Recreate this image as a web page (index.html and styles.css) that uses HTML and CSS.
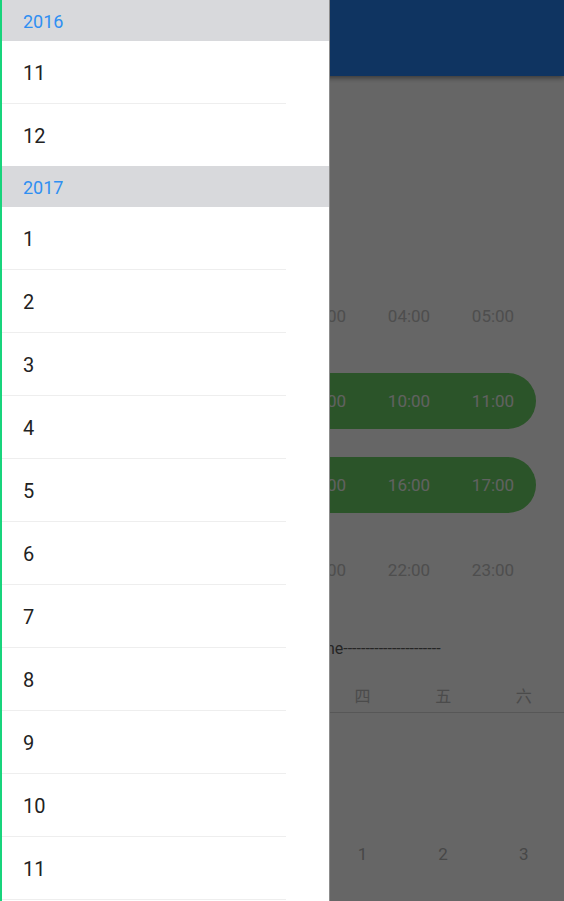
FILE: index.html
```html
<!DOCTYPE html>
<html lang="zh">
<head>
<meta charset="utf-8">
<title>Schedule</title>
<link rel="stylesheet" href="styles.css">
</head>
<body>
<div class="page">
  <header class="appbar"></header>
  <main class="content">
    <div class="hours">
      <div class="hour-row">
        <span>00:00</span><span>01:00</span><span>02:00</span><span>03:00</span><span>04:00</span><span>05:00</span>
      </div>
      <div class="hour-row selected">
        <span>06:00</span><span>07:00</span><span>08:00</span><span>09:00</span><span>10:00</span><span>11:00</span>
      </div>
      <div class="hour-row selected">
        <span>12:00</span><span>13:00</span><span>14:00</span><span>15:00</span><span>16:00</span><span>17:00</span>
      </div>
      <div class="hour-row">
        <span>18:00</span><span>19:00</span><span>20:00</span><span>21:00</span><span>22:00</span><span>23:00</span>
      </div>
    </div>
    <p class="title">----------Timeline----------------------</p>
    <div class="week">
      <span>日</span><span>一</span><span>二</span><span>三</span><span>四</span><span>五</span><span>六</span>
    </div>
    <div class="days">
      <span></span><span></span><span></span><span></span><span>1</span><span>2</span><span>3</span>
    </div>
  </main>
</div>
<div class="scrim"></div>
<nav class="drawer">
  <div class="group-head">2016</div>
  <div class="item">11</div>
  <div class="item last">12</div>
  <div class="group-head">2017</div>
  <div class="item">1</div>
  <div class="item">2</div>
  <div class="item">3</div>
  <div class="item">4</div>
  <div class="item">5</div>
  <div class="item">6</div>
  <div class="item">7</div>
  <div class="item">8</div>
  <div class="item">9</div>
  <div class="item">10</div>
  <div class="item">11</div>
  <div class="item">12</div>
</nav>
</body>
</html>
```
FILE: styles.css
```css
* { box-sizing: border-box; }
html, body {
  margin: 0;
  padding: 0;
  width: 564px;
  height: 901px;
  overflow: hidden;
  background: #ffffff;
  font-family: Roboto, "Noto Sans CJK SC", sans-serif;
}
.page {
  width: 564px;
  height: 901px;
  display: flex;
  flex-direction: column;
}
.appbar {
  height: 76px;
  flex: none;
  background: #2682f3;
  box-shadow: 0 2px 5px rgba(0, 0, 0, 0.45);
  position: relative;
  z-index: 1;
}
.content {
  flex: 1;
  display: flex;
  flex-direction: column;
  padding-top: 212px;
}
.hours {
  display: flex;
  flex-direction: column;
  gap: 28.5px;
  padding: 0 28px;
}
.hour-row {
  height: 56px;
  display: grid;
  grid-template-columns: repeat(6, 84px);
  align-items: center;
  padding: 0 1px 0 3px;
  border-radius: 28px;
  color: #c2c2c2;
  font-size: 17px;
}
.hour-row span { text-align: center; }
.hour-row.selected {
  background: #6cd166;
  color: #f0f4ef;
}
.title {
  margin: 38px 0 0 0;
  padding-left: 238px;
  font-size: 16px;
  line-height: 26px;
  color: #5e5e5e;
  white-space: nowrap;
}
.week {
  margin-top: 16px;
  display: grid;
  grid-template-columns: repeat(7, 1fr);
  height: 35px;
  align-items: center;
  border-bottom: 1px solid #d9d9d9;
  color: #bbbbbb;
  font-size: 16px;
}
.week span, .days span { text-align: center; }
.days {
  margin-top: 124px;
  display: grid;
  grid-template-columns: repeat(7, 1fr);
  height: 34px;
  align-items: center;
  color: #b3b3b3;
  font-size: 17px;
}
.scrim {
  position: fixed;
  inset: 0;
  background: rgba(0, 0, 0, 0.6);
  z-index: 5;
}
.drawer {
  position: fixed;
  top: 0;
  left: 0;
  bottom: 0;
  width: 330px;
  background: #ffffff;
  border-left: 2px solid #18d47c;
  border-right: 1px solid #8c8c8c;
  z-index: 10;
  overflow: hidden;
  display: flex;
  flex-direction: column;
}
.group-head {
  flex: none;
  height: 41px;
  background: #d8d9dc;
  color: #2f8ff2;
  font-size: 18px;
  display: flex;
  align-items: center;
  padding-left: 21px;
  padding-top: 1px;
}
.item {
  flex: none;
  height: 63px;
  display: flex;
  align-items: center;
  padding-left: 21px;
  padding-top: 1px;
  font-size: 20px;
  color: #222222;
  border-bottom: 1px solid #eeeeee;
  margin-right: 43px;
}
.item.last {
  border-bottom: none;
  height: 62px;
}
```
